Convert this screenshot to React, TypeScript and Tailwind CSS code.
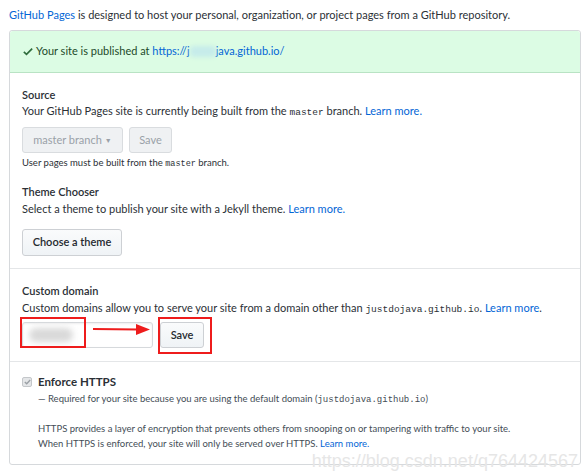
import React from "react";

const font = { fontFamily: "Lato, 'Open Sans', sans-serif" };
const mono = { fontFamily: "'Liberation Mono', monospace" };

function Btn({ children, disabled, w }: { children: React.ReactNode; disabled?: boolean; w: string }) {
  return (
    <div
      className={`${w} h-full flex items-center justify-center rounded-[3px] border text-[11px] ${
        disabled
          ? "border-[#d9dcdf] bg-[#eff1f3] text-[#9aa1a8]"
          : "border-[#cdd0d4] bg-gradient-to-b from-[#fafbfc] to-[#eff3f6] text-[#24292e] font-semibold"
      }`}
    >
      {children}
    </div>
  );
}

export default function App() {
  return (
    <div className="w-[588px] h-[472px] bg-white relative overflow-hidden text-[#2b3036]" style={font}>
      <div className="pl-[9px] pt-[7px] h-[30px] text-[11px] leading-[16px]">
        <span className="text-[#0366d6]">GitHub Pages</span> is designed to host your personal, organization, or project pages from a GitHub repository.
      </div>
      <div className="ml-[9px] w-[572px] border border-[#d6d9dc] rounded-[3px]">
        <div className="h-[42px] bg-[#dcfce4] border-b border-[#b9e3c4] flex items-center pl-[13px] text-[11px] text-[#1c4a2a] rounded-t-[3px]">
          <svg width="10" height="9" viewBox="0 0 12 10" className="mr-[3px]">
            <path d="M1 5.5 L4.2 8.5 L11 1.5" stroke="#2f6b3c" strokeWidth="2" fill="none" />
          </svg>
          <span>Your site is published at&nbsp;</span>
          <span className="text-[#0366d6]">https://j</span>
          <span className="inline-block w-[26px] h-[11px] bg-[#c6ecea] blur-[2px] rounded" />
          <span className="text-[#0366d6]">java.github.io/</span>
        </div>

        <div className="pl-[12px] pt-[14px] pb-[12px] border-b border-[#e4e6e8] text-[11px]">
          <div className="leading-[16px] font-semibold">Source</div>
          <div className="leading-[16px]">
            Your GitHub Pages site is currently being built from the{" "}
            <span className="text-[9.5px]" style={mono}>master</span> branch.{" "}
            <span className="text-[#0366d6]">Learn more.</span>
          </div>
          <div className="mt-[6px] h-[26px] flex gap-[6px]">
            <Btn disabled w="w-[101px]">
              master branch <span className="ml-[3px] text-[7px]">▼</span>
            </Btn>
            <Btn disabled w="w-[43px]">Save</Btn>
          </div>
          <div className="mt-[3px] leading-[14px] text-[9.5px]">
            User pages must be built from the{" "}
            <span className="text-[8.5px]" style={mono}>master</span> branch.
          </div>
          <div className="mt-[13px] leading-[16px] font-semibold">Theme Chooser</div>
          <div className="mt-[1px] leading-[16px]">
            Select a theme to publish your site with a Jekyll theme. <span className="text-[#0366d6]">Learn more.</span>
          </div>
          <div className="mt-[12px] h-[27px] flex">
            <Btn w="w-[100px]">Choose a theme</Btn>
          </div>
        </div>

        <div className="pl-[12px] pt-[14px] pb-[13px] border-b border-[#e4e6e8] text-[11px] relative">
          <div className="leading-[16px] font-semibold">Custom domain</div>
          <div className="mt-[1px] leading-[16px]">
            Custom domains allow you to serve your site from a domain other than{" "}
            <span className="text-[9.5px]" style={mono}>justdojava.github.io</span>.{" "}
            <span className="text-[#0366d6]">Learn more</span>.
          </div>
          <div className="mt-[4px] h-[26px] flex gap-[7px]">
            <div className="w-[131px] h-full border border-[#d6d9dc] rounded-[3px] bg-white shadow-[inset_0_1px_2px_rgba(27,31,35,0.075)] flex items-center pl-[6px]">
              <div className="w-[44px] h-[14px] bg-[#d9d9d9] blur-[3px] rounded-full" />
            </div>
            <Btn w="w-[44px]">Save</Btn>
          </div>
          <div className="absolute left-[10px] top-[48px] w-[66px] h-[31px] border-2 border-[#ee1c1c]" />
          <svg className="absolute left-[82px] top-[53px]" width="60" height="14" viewBox="0 0 60 14">
            <line x1="1" y1="7" x2="46" y2="7.5" stroke="#ee1c1c" strokeWidth="2" />
            <polygon points="44,2 58,7.5 44,13" fill="#ee1c1c" />
          </svg>
          <div className="absolute left-[148px] top-[48px] w-[54px] h-[37px] border-2 border-[#ee1c1c]" />
        </div>

        <div className="pl-[12px] pt-[12px] pb-[13px] text-[11px]">
          <div className="flex items-center h-[16px]">
            <div className="w-[10px] h-[10px] rounded-[2px] border border-[#c4c7ca] bg-[#e4e6e8] flex items-center justify-center">
              <svg width="7" height="6" viewBox="0 0 7 6">
                <path d="M0.8 3 L2.7 4.8 L6.2 1" stroke="#9a9fa4" strokeWidth="1.3" fill="none" />
              </svg>
            </div>
            <span className="ml-[6px] font-bold text-[11.5px]">Enforce HTTPS</span>
          </div>
          <div className="mt-[2px] pl-[16px] leading-[14px] text-[9.5px] text-[#444d56]">
            — Required for your site because you are using the default domain (
            <span className="text-[9px]" style={mono}>justdojava.github.io</span>)
          </div>
          <div className="mt-[14px] pl-[16px] leading-[15px] text-[9.5px] text-[#444d56]">
            <div>HTTPS provides a layer of encryption that prevents others from snooping on or tampering with traffic to your site.</div>
            <div>
              When HTTPS is enforced, your site will only be served over HTTPS. <span className="text-[#0366d6]">Learn more.</span>
            </div>
          </div>
        </div>
      </div>
      <div
        className="absolute right-[10px] top-[450px] text-[18px] leading-[22px] text-[#e6e6e6]"
        style={{ fontFamily: "'Liberation Sans', sans-serif" }}
      >
        https://blog.csdn.net/q764424567
      </div>
    </div>
  );
}
